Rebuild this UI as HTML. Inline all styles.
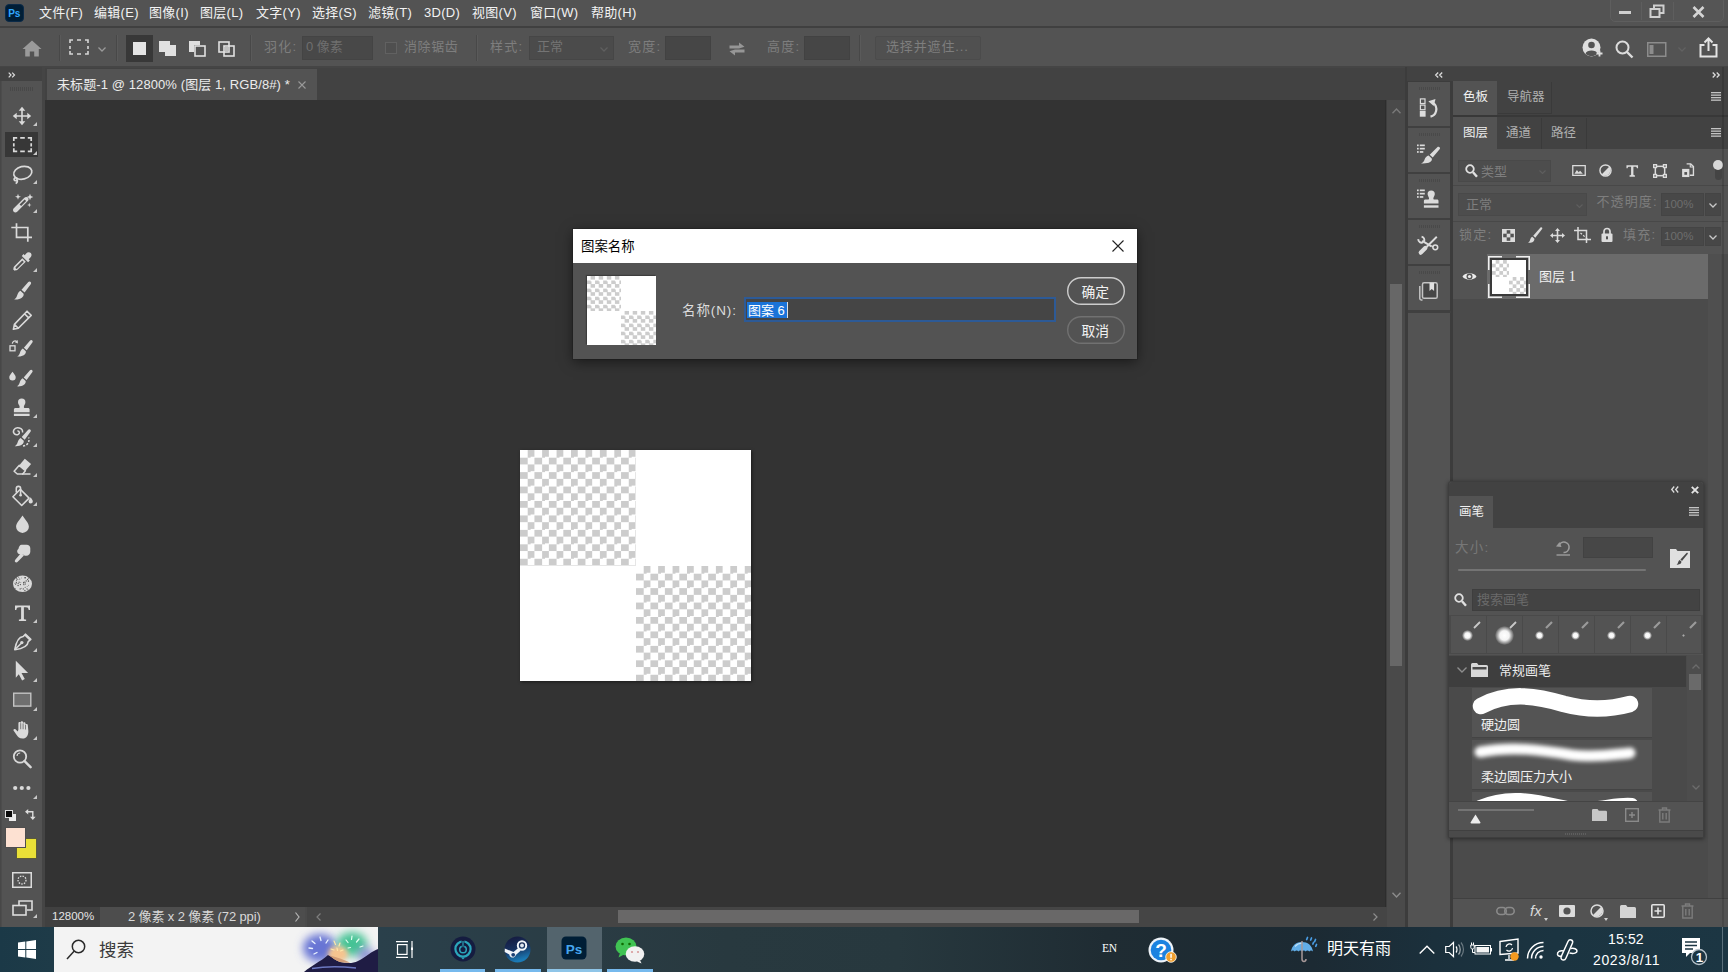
<!DOCTYPE html>
<html lang="zh-CN">
<head>
<meta charset="utf-8">
<title>未标题-1 @ 12800% (图层 1, RGB/8#) *</title>
<style>
*{box-sizing:border-box;margin:0;padding:0}
html,body{width:1728px;height:972px;overflow:hidden;background:#4a4a4a}
body{position:relative;font-family:"Liberation Sans","Noto Sans CJK SC",sans-serif;font-size:13px;color:#e6e6e6;line-height:1}
.a{position:absolute}
svg{position:absolute;overflow:visible}
.t{position:absolute;white-space:nowrap;line-height:1}
/* ===== menu bar ===== */
#menubar{position:absolute;left:0;top:0;width:1728px;height:28px;background:#535353;border-bottom:2px solid #404040}
#menubar .m{position:absolute;top:6px;font-size:13px;color:#f2f2f2;white-space:nowrap;letter-spacing:0.300px}
/* ===== options bar ===== */
#optbar{position:absolute;left:0;top:28px;width:1728px;height:39px;background:#535353;border-bottom:1px solid #454545}
#optbar .t{font-size:13px;color:#7e7e7e;top:12px}
#optbar>svg,#optbar>div{margin-top:0}
.sep{position:absolute;top:7px;width:1px;height:26px;background:#484848;border-right:1px solid #5a5a5a;box-sizing:content-box}
.field{position:absolute;background:#4b4b4b;border:1px solid #464646}
/* ===== workspace ===== */
#work{position:absolute;left:0;top:67px;width:1728px;height:860px;background:#454545}
#tools{position:absolute;left:0;top:0;width:42px;height:860px;background:#535353;box-shadow:inset 1.500px 0 0 #474747}
#toolhead{position:absolute;left:0;top:0;width:42px;height:14px;background:#424242}
#tabstrip{position:absolute;left:45px;top:1px;width:1360px;height:32px;background:#424242}
#doctab{position:absolute;left:2px;top:1px;width:270px;height:31px;background:#535353;color:#ececec;font-size:13px}
#canvas{position:absolute;left:45px;top:33px;width:1340px;height:807px;background:#333333}
#vscroll{position:absolute;left:1387px;top:33px;width:18px;height:807px;background:#4a4a4a;box-shadow:-1px 0 0 #3e3e3e,-2px 0 0 #2d2d2d}
#status{position:absolute;left:45px;top:840px;width:1360px;height:20px;background:#4a4a4a}
.ck{background-color:#fff;background-image:conic-gradient(#ccc 25%,#fff 0 50%,#ccc 0 75%,#fff 0);background-size:14.4375px 14.4375px;background-position:0 0}
.dk{left:0;width:41.500px;height:46px;border-bottom:2px solid #404040}
.dk:before{content:"";position:absolute;left:11px;top:5px;width:21px;height:3px;background:repeating-linear-gradient(90deg,#494949 0 1px,#535353 1px 2px)}
.ptab{font-size:12.5px}
.ck2{background-color:#fff;background-image:conic-gradient(#ccc 25%,#fff 0 50%,#ccc 0 75%,#fff 0);background-size:7.400px 7.400px}
.rb{top:134px;width:35px;height:37px;background:#535353}
.dot{border-radius:50%;background:radial-gradient(circle,#fff 0,#f4f4f4 35%,rgba(255,255,255,0) 72%)}
.ck3{background-color:#fff;background-image:conic-gradient(#ccc 25%,#fff 0 50%,#ccc 0 75%,#fff 0);background-size:8.100px 8.100px}
.ul{top:42px;height:3px;background:#76b9ed}
/* ===== taskbar ===== */
#taskbar{position:absolute;left:0;top:926.500px;width:1728px;height:45.500px;background:linear-gradient(90deg,#1b3947 0,#1e3b48 3%,#2a404b 22%,#2a3c44 34%,#28393f 42%,#27383e 52%,#1f2c33 64%,#1c2a33 76%,#1b303c 83%,#1b3441 90%,#1c3643 100%)}
</style>
</head>
<body>
<div id="menubar">
  <svg style="left:5px;top:4px" width="19" height="18" viewBox="0 0 19 18"><rect x="0.5" y="0.5" width="18" height="17" rx="3.5" fill="#001e36" stroke="#0b2a48"/><text x="3.2" y="13" font-family="Liberation Sans, sans-serif" font-size="10" font-weight="bold" fill="#31a8ff">Ps</text></svg>
  <span class="m" style="left:39px">文件(F)</span>
  <span class="m" style="left:94px">编辑(E)</span>
  <span class="m" style="left:149px">图像(I)</span>
  <span class="m" style="left:200px">图层(L)</span>
  <span class="m" style="left:256px">文字(Y)</span>
  <span class="m" style="left:312px">选择(S)</span>
  <span class="m" style="left:368px">滤镜(T)</span>
  <span class="m" style="left:424px">3D(D)</span>
  <span class="m" style="left:472px">视图(V)</span>
  <span class="m" style="left:530px">窗口(W)</span>
  <span class="m" style="left:591px">帮助(H)</span>
  <div class="a" style="left:1610px;top:-4px;width:114px;height:26px;border:1px solid #5e5e5e;border-radius:5px;background:#555"></div>
  <div class="a" style="left:1641px;top:2px;width:1px;height:18px;background:#5e5e5e"></div>
  <div class="a" style="left:1673px;top:2px;width:1px;height:18px;background:#5e5e5e"></div>
  <div class="a" style="left:1619px;top:11px;width:12px;height:3px;background:#cfcfcf"></div>
  <svg style="left:1649px;top:4px" width="16" height="15" viewBox="0 0 16 15" fill="none" stroke="#cfcfcf" stroke-width="2"><path d="M5 4V1.5h9.5V9H11"/><rect x="1.5" y="5" width="9" height="8"/></svg>
  <svg style="left:1692px;top:6px" width="13" height="12" viewBox="0 0 13 12" fill="none" stroke="#d4d4d4" stroke-width="2.6"><path d="M1.5 1l10 10M11.5 1l-10 10"/></svg>
</div>

<div id="optbar">
  <!-- home -->
  <svg style="left:22px;top:12px" width="20" height="17" viewBox="0 0 20 17"><path d="M10 0.5L0.5 9h2.7v7.5h4.6v-5h4.4v5h4.6V9h2.7z" fill="#9a9a9a"/></svg>
  <div class="sep" style="left:59px"></div>
  <!-- marquee -->
  <svg style="left:69px;top:11px" width="20" height="16" viewBox="0 0 20 16" fill="none" stroke="#d6d6d6" stroke-width="1.6"><path d="M1 4V1h3M8 1h4M16 1h3v3M19 7v3M19 12v3h-3M12 15H8M4 15H1v-3M1 10V7"/></svg>
  <svg style="left:98px;top:19px" width="8" height="5" viewBox="0 0 8 5" fill="none" stroke="#9a9a9a" stroke-width="1.3"><path d="M0.5 0.5l3.5 3.5l3.500 -3.5"/></svg>
  <div class="sep" style="left:116px"></div>
  <!-- selection modes -->
  <div class="a" style="left:126px;top:7px;width:27px;height:27px;background:#383838"></div>
  <div class="a" style="left:133px;top:14px;width:13px;height:13px;background:#e4e4e4"></div>
  <svg style="left:159px;top:13px" width="18" height="16" viewBox="0 0 18 16"><path d="M0 0h11v4h6v11H6v-4H0z" fill="#e0e0e0"/></svg>
  <svg style="left:189px;top:13px" width="17" height="16" viewBox="0 0 17 16"><path d="M0 0h11v4H5v7H0z" fill="#e0e0e0"/><rect x="6" y="5" width="10" height="10" fill="none" stroke="#e0e0e0" stroke-width="1.6"/></svg>
  <svg style="left:218px;top:13px" width="17" height="16" viewBox="0 0 17 16" fill="none" stroke="#e0e0e0" stroke-width="1.6"><rect x="1" y="1" width="10" height="10"/><rect x="6" y="5" width="10" height="10"/><rect x="7" y="6" width="3.500" height="4.500" fill="#bdbdbd" stroke="none"/></svg>
  <div class="sep" style="left:250px"></div>
  <span class="t" style="left:264px;letter-spacing:1.200px">羽化:</span>
  <div class="field" style="left:302px;top:8px;width:71px;height:24px;background:#484848;border-color:#444"></div>
  <span class="t" style="left:306px;color:#6f6f6f">0 像素</span>
  <div class="a" style="left:385px;top:14px;width:12px;height:12px;border:1px solid #616161;background:#4f4f4f"></div>
  <span class="t" style="left:404px;letter-spacing:0.600px">消除锯齿</span>
  <div class="sep" style="left:476px"></div>
  <span class="t" style="left:490px;letter-spacing:1.200px">样式:</span>
  <div class="field" style="left:529px;top:8px;width:85px;height:24px"></div>
  <span class="t" style="left:537px;color:#747474">正常</span>
  <svg style="left:600px;top:19px" width="8" height="5" viewBox="0 0 8 5" fill="none" stroke="#5f5f5f" stroke-width="1.3"><path d="M0.5 0.5l3.5 3.5l3.500 -3.5"/></svg>
  <span class="t" style="left:628px;letter-spacing:1.200px">宽度:</span>
  <div class="field" style="left:665px;top:8px;width:46px;height:24px;background:#464646;border-color:#424242"></div>
  <svg style="left:729px;top:14px" width="16" height="14" viewBox="0 0 16 14" fill="#969696"><path d="M0.500 3.400h9.500V0.500l5.500 4.300l-5.500 1.700H0.500zM15.500 10.600H6v2.900L0.500 9.200L6 7.500h9.500z"/></svg>
  <span class="t" style="left:767px;letter-spacing:1.200px">高度:</span>
  <div class="field" style="left:804px;top:8px;width:46px;height:24px;background:#464646;border-color:#424242"></div>
  <div class="sep" style="left:859px"></div>
  <div class="a" style="left:875px;top:8px;width:106px;height:24px;border:1px solid #4b4b4b;background:#505050;border-radius:2px"></div>
  <span class="t" style="left:886px;letter-spacing:0.850px">选择并遮住...</span>
  <!-- right icons -->
  <svg style="left:1582px;top:10px" width="22" height="21" viewBox="0 0 22 21"><circle cx="9.500" cy="9.500" r="9" fill="#dedede"/><circle cx="9.500" cy="7" r="3.300" fill="#535353"/><path d="M3.500 15.500c1-4 11-4 12 0c-3 3.500-9 3.500-12 0z" fill="#535353"/><path d="M14.500 15.500h6M17.500 12.500v6" stroke="#dedede" stroke-width="1.800"/></svg>
  <svg style="left:1615px;top:12px" width="19" height="19" viewBox="0 0 19 19" fill="none" stroke="#dcdcdc" stroke-width="2"><circle cx="7.500" cy="7.500" r="6"/><path d="M12 12l5.500 5.500" stroke-width="2.400"/></svg>
  <svg style="left:1647px;top:14px" width="20" height="15" viewBox="0 0 20 15"><rect x="0.750" y="0.750" width="18" height="13.500" fill="none" stroke="#8c8c8c" stroke-width="1.500"/><rect x="2.500" y="3" width="4" height="9" fill="#8c8c8c"/></svg>
  <svg style="left:1678px;top:19px" width="8" height="5" viewBox="0 0 8 5" fill="none" stroke="#616161" stroke-width="1.300"><path d="M0.500 0.500l3.500 3.500l3.500 -3.500"/></svg>
  <svg style="left:1699px;top:9px" width="19" height="21" viewBox="0 0 19 21" fill="none" stroke="#e4e4e4" stroke-width="2"><path d="M5.500 8H1.500v11.500h16V8H13.500"/><path d="M9.500 14V2M5.500 5.500L9.500 1.500l4 4" /></svg>
</div>

<div id="work">
<div id="tools"><div id="toolhead"></div>
<svg style="left:7.500px;top:5px" width="8" height="6" viewBox="0 0 8 6" fill="none" stroke="#dcdcdc" stroke-width="1.200"><path d="M0.700 0.700L3 3L0.700 5.300M4.200 0.700L6.500 3L4.200 5.300"/></svg>
<div class="a" style="left:10px;top:20px;width:23px;height:4px;background:repeating-linear-gradient(90deg,#484848 0 1px,#535353 1px 2px)"></div>
<svg style="left:9.700px;top:36.50px" width="24" height="24" viewBox="0 0 24 24"><g fill="none" stroke="#dadada" stroke-width="1.600"><path d="M12 5v14M5 12h14"/></g><g fill="#dadada"><path d="M12 2.800l3.300 3.900H8.700zM12 21.200l3.300-3.900H8.700zM2.800 12l3.900-3.300v6.600zM21.200 12l-3.900-3.300v6.600z"/></g></svg>
<svg style="left:32.500px;top:54.7px" width="4" height="4" viewBox="0 0 4 4"><path d="M4 0V4H0z" fill="#c8c8c8"/></svg>
<div class="a" style="left:5px;top:64.7px;width:33px;height:25px;background:#373737"></div>
<svg style="left:9.700px;top:65.75px" width="24" height="24" viewBox="0 0 24 24"><g fill="none" stroke="#dadada" stroke-width="1.700"><path d="M3.800 8V4.800h3.400M10.200 4.800h4.600M17.800 4.800h3.400V8M21.200 10.200v3.200M21.200 15.200v3.200h-3.400M14.800 18.400h-4.600M7.200 18.400H3.800v-3.200M3.800 13.400v-3.200"/></g></svg>
<svg style="left:32.500px;top:83.9px" width="4" height="4" viewBox="0 0 4 4"><path d="M4 0V4H0z" fill="#c8c8c8"/></svg>
<svg style="left:9.700px;top:95.00px" width="24" height="24" viewBox="0 0 24 24"><g fill="none" stroke="#dadada" stroke-width="1.700"><ellipse cx="12.800" cy="10.800" rx="9.200" ry="6.300" transform="rotate(-14 12.800 10.800)"/><path d="M6.300 15.800c-1.600-0.300-2.600 0.900-2.100 2c0.500 1.100 2.500 1.100 2.900-0.200c0.300-0.900-0.300-1.600-0.800-1.800zM7 18c0.700 1.300 0.300 2.600-1.300 3.600"/></g></svg>
<svg style="left:32.500px;top:113.2px" width="4" height="4" viewBox="0 0 4 4"><path d="M4 0V4H0z" fill="#c8c8c8"/></svg>
<svg style="left:9.700px;top:124.25px" width="24" height="24" viewBox="0 0 24 24"><g fill="#dadada"><path d="M14.400 6.700c1-1 2.600-1 3.500-0.100c0.900 0.900 0.900 2.500-0.100 3.500L7.200 20.700c-1 1-2.600 1-3.500 0.100c-0.900-0.900-0.900-2.500 0.100-3.500z"/><path d="M14.600 8.600l1.500 1.500l-5 5l-1.500-1.500z" fill="#535353"/><path d="M8 2.800l0.800 2.200l2.200 0.800l-2.200 0.800L8 8.800l-0.800-2.200L5 5.800l2.200-0.800zM20 2.700l0.900 2.400l2.400 0.900l-2.400 0.900L20 9.300l-0.900-2.400L16.700 6l2.400-0.900zM19.300 11.800l0.600 1.600l1.600 0.600l-1.600 0.600l-0.600 1.600l-0.600-1.600L17.100 14l1.600-0.600z"/></g></svg>
<svg style="left:32.500px;top:142.4px" width="4" height="4" viewBox="0 0 4 4"><path d="M4 0V4H0z" fill="#c8c8c8"/></svg>
<svg style="left:9.700px;top:153.50px" width="24" height="24" viewBox="0 0 24 24"><g fill="none" stroke="#dadada" stroke-width="1.700"><path d="M6.500 2.300v14h15.500M1.300 6.500h16.500v14.300"/></g></svg>
<svg style="left:9.700px;top:182.75px" width="24" height="24" viewBox="0 0 24 24"><g fill="#dadada"><path d="M16.200 3.400c1.300-1.500 3.500-1.500 4.600-0.300c1.100 1.200 1 3.200-0.400 4.500l-1.700 1.600l1.200 1.200l-1.800 1.800l-6.300-6.300l1.800-1.800l1.100 1.100z"/><path d="M12.300 8.200l3.500 3.500l-8.300 8.100c-0.900 0.900-2.200 0.300-2.900 1l-1.500-1.500c0.700-0.700 0.100-2 1-2.900zM12.300 10.600l-6.500 6.500c-0.400 0.400-0.400 1.100 0 1.500c0.400 0.400 1.100 0.400 1.500 0l6.500-6.500z" fill-rule="evenodd"/></g></svg>
<svg style="left:32.500px;top:200.9px" width="4" height="4" viewBox="0 0 4 4"><path d="M4 0V4H0z" fill="#c8c8c8"/></svg>
<svg style="left:9.700px;top:212.00px" width="24" height="24" viewBox="0 0 24 24"><g transform="translate(0,0) scale(1.0)" fill="#dadada"><path d="M18.300 3.100c1.300-1.500 3.600 0.200 2.600 1.900L14.600 13.600l-3.100-2.800z"/><path d="M10.400 11.800l3.200 2.900c0.700 3.200-3.200 6.200-9.400 5.700c2-0.900 2.500-2.600 3.100-4.300c0.600-1.800 1.500-3.500 3.100-4.300z"/></g></svg>
<svg style="left:9.700px;top:241.25px" width="24" height="24" viewBox="0 0 24 24"><g fill="none" stroke="#dadada" stroke-width="1.600" stroke-linejoin="round"><path d="M17 3.200l4.200 4.200L8.300 20.300L3.400 21.300l1-4.900zM14.500 5.700l4.200 4.200M4.400 16.400l3.900 3.900"/></g></svg>
<svg style="left:9.700px;top:270.50px" width="24" height="24" viewBox="0 0 24 24"><g transform="translate(3.3,-0.3) scale(0.92)" fill="#dadada"><path d="M18.300 3.100c1.300-1.500 3.600 0.200 2.600 1.900L14.600 13.600l-3.100-2.800z"/><path d="M10.400 11.800l3.200 2.900c0.700 3.200-3.200 6.200-9.400 5.700c2-0.900 2.500-2.600 3.100-4.300c0.600-1.800 1.500-3.500 3.100-4.300z"/></g><g fill="none" stroke="#dadada" stroke-width="1.300"><rect x="0" y="7.800" width="5" height="5"/><path d="M2.300 5.600c0.300-2.200 2.300-3.300 4.300-2.300"/></g><path d="M7.700 2l0.200 3.500l-3-1.300z" fill="#dadada"/></svg>
<svg style="left:9.700px;top:299.75px" width="24" height="24" viewBox="0 0 24 24"><g transform="translate(3,0.4) scale(0.93)" fill="#dadada"><path d="M18.300 3.100c1.300-1.500 3.600 0.200 2.600 1.900L14.600 13.600l-3.100-2.800z"/><path d="M10.400 11.800l3.200 2.900c0.700 3.200-3.200 6.200-9.400 5.700c2-0.900 2.500-2.600 3.100-4.300c0.600-1.800 1.500-3.500 3.100-4.300z"/></g><path d="M2.500 4.800c2 2.700 3.200 4 3.200 5.400a3.200 3.200 0 0 1-6.400 0c0-1.400 1.200-2.700 3.200-5.400z" fill="#dadada"/></svg>
<svg style="left:9.700px;top:329.00px" width="24" height="24" viewBox="0 0 24 24"><g fill="#dadada"><path d="M11.700 2.500a3.700 3.700 0 0 1 3.700 3.700c0 1.700-1.100 2.600-1.500 4.200c-0.200 1 0.300 1.600 1.100 1.600H18c0.900 0 1.600 0.600 1.600 1.600v2.600H3.900v-2.600c0-1 0.700-1.600 1.600-1.600h3c0.800 0 1.300-0.600 1.100-1.600C9.200 8.800 8 7.900 8 6.200a3.700 3.700 0 0 1 3.700-3.700z"/><rect x="3.900" y="17.700" width="15.700" height="2.300"/></g></svg>
<svg style="left:32.500px;top:347.2px" width="4" height="4" viewBox="0 0 4 4"><path d="M4 0V4H0z" fill="#c8c8c8"/></svg>
<svg style="left:9.700px;top:358.25px" width="24" height="24" viewBox="0 0 24 24"><g transform="translate(0.8,1.8) scale(0.95)" fill="#dadada"><path d="M18.300 3.100c1.300-1.500 3.600 0.200 2.600 1.900L14.600 13.600l-3.100-2.800z"/><path d="M10.400 11.800l3.200 2.900c0.700 3.200-3.200 6.200-9.400 5.700c2-0.900 2.500-2.600 3.100-4.300c0.600-1.800 1.500-3.500 3.100-4.300z"/></g><g fill="none" stroke="#dadada" stroke-width="1.500"><path d="M12.500 7.500c0.800-4.500-6.500-6.500-8.600-2.600c-1.700 3.300 1.800 5.900 4.400 4.400c1.900-1.100 1.100-3.700-0.900-3.300"/><path d="M13 21c4.200-0.300 7-4 5.600-8.500" stroke-dasharray="2.200 1.400"/></g></svg>
<svg style="left:32.500px;top:376.4px" width="4" height="4" viewBox="0 0 4 4"><path d="M4 0V4H0z" fill="#c8c8c8"/></svg>
<svg style="left:9.700px;top:387.50px" width="24" height="24" viewBox="0 0 24 24"><path d="M14.800 3.700l6.300 5.400l-5.700 6.700l-6.300-5.400z" fill="#dadada"/><path d="M9.100 10.400l6.300 5.400l-2.700 3.200H7.300l-3.200-2.700z" fill="none" stroke="#dadada" stroke-width="1.500" stroke-linejoin="round"/><path d="M12 19h8.500" stroke="#dadada" stroke-width="1.500"/></svg>
<svg style="left:32.500px;top:405.7px" width="4" height="4" viewBox="0 0 4 4"><path d="M4 0V4H0z" fill="#c8c8c8"/></svg>
<svg style="left:9.700px;top:416.75px" width="24" height="24" viewBox="0 0 24 24"><g fill="none" stroke="#dadada" stroke-width="1.600" stroke-linejoin="round"><path d="M10.300 5.300l8.800 8.800l-7.400 7.400l-8.800-8.800z"/><path d="M10.600 11V4.600c0-3-4.300-3-4.300 0v3.800"/></g><circle cx="10.600" cy="11.300" r="1.300" fill="#dadada"/><path d="M20.700 13.300c1.400 2.100 2.100 3.100 2.100 4.100a2.100 2.100 0 0 1-4.200 0c0-1 0.700-2 2.100-4.100z" fill="#dadada"/></svg>
<svg style="left:32.500px;top:434.9px" width="4" height="4" viewBox="0 0 4 4"><path d="M4 0V4H0z" fill="#c8c8c8"/></svg>
<svg style="left:9.700px;top:446.00px" width="24" height="24" viewBox="0 0 24 24"><path d="M12.500 2.400c3.900 5.700 6.400 8.200 6.400 11.300a6.400 6.200 0 0 1-12.800 0c0-3.100 2.500-5.600 6.400-11.300z" fill="#dadada"/></svg>
<svg style="left:9.700px;top:475.25px" width="24" height="24" viewBox="0 0 24 24"><g fill="#dadada"><path d="M11.500 2.800h5.200c2 0 3.600 1.500 3.600 3.500v3.500c0 2.300-1.700 4-4 4c-1.500 0-2.700-0.500-3.400-1.500c-1.600-0.500-3.500 0.700-5-1c-1.300-1.500-0.800-3.500 0.600-4.500C8.800 4.500 10 2.800 11.500 2.800z"/><path d="M11.300 10.800l2.600 2.600L8 19.600c-0.900 0.900-2.100 1.200-2.800 0.500c-0.700-0.700-0.400-1.900 0.500-2.800z"/></g></svg>
<svg style="left:9.700px;top:504.50px" width="24" height="24" viewBox="0 0 24 24"><ellipse cx="12.500" cy="11.800" rx="9.500" ry="8.300" fill="#dadada"/><g fill="#535353"><circle cx="9.7" cy="7.0" r="0.60"/><circle cx="5.7" cy="12.2" r="0.51"/><circle cx="5.4" cy="11.9" r="0.41"/><circle cx="11.4" cy="5.9" r="0.43"/><circle cx="11.3" cy="16.2" r="0.44"/><circle cx="8.1" cy="13.5" r="0.68"/><circle cx="13.7" cy="10.4" r="0.69"/><circle cx="5.2" cy="16.6" r="0.49"/><circle cx="6.8" cy="6.6" r="0.49"/><circle cx="17.6" cy="7.4" r="0.57"/><circle cx="14.7" cy="10.0" r="0.56"/><circle cx="5.5" cy="5.8" r="0.46"/><circle cx="15.4" cy="10.8" r="0.49"/><circle cx="13.9" cy="11.1" r="0.49"/><circle cx="17.2" cy="14.4" r="0.47"/><circle cx="13.7" cy="12.1" r="0.66"/><circle cx="16.2" cy="8.9" r="0.69"/><circle cx="6.4" cy="10.6" r="0.63"/><circle cx="6.9" cy="11.6" r="0.41"/><circle cx="15.2" cy="15.3" r="0.57"/><circle cx="18.5" cy="9.2" r="0.61"/><circle cx="14.0" cy="12.8" r="0.54"/><circle cx="17.9" cy="17.8" r="0.54"/><circle cx="15.1" cy="5.8" r="0.61"/><circle cx="14.9" cy="18.4" r="0.65"/><circle cx="9.1" cy="10.2" r="0.60"/><circle cx="4.9" cy="11.2" r="0.45"/><circle cx="6.4" cy="5.8" r="0.63"/><circle cx="6.6" cy="8.3" r="0.52"/><circle cx="18.4" cy="6.1" r="0.53"/><circle cx="13.3" cy="16.9" r="0.65"/><circle cx="18.3" cy="8.8" r="0.52"/><circle cx="10.2" cy="16.9" r="0.69"/><circle cx="6.9" cy="7.4" r="0.47"/><circle cx="8.2" cy="11.5" r="0.58"/><circle cx="8.7" cy="5.1" r="0.53"/><circle cx="10.4" cy="12.6" r="0.69"/><circle cx="15.5" cy="12.0" r="0.59"/><circle cx="15.3" cy="5.7" r="0.67"/><circle cx="17.0" cy="16.8" r="0.64"/><circle cx="10.8" cy="10.4" r="0.43"/><circle cx="14.6" cy="5.8" r="0.42"/><circle cx="7.8" cy="7.2" r="0.50"/><circle cx="5.3" cy="5.0" r="0.45"/><circle cx="6.1" cy="9.9" r="0.41"/><circle cx="18.5" cy="13.3" r="0.44"/></g></svg>
<svg style="left:9.700px;top:533.75px" width="24" height="24" viewBox="0 0 24 24"><path d="M5 4.600h15v4.300h-1.300c-0.300-2-1-2.700-2.800-2.700h-2v11c0 1 0.500 1.300 2.200 1.300V20H8.900v-1.500c1.700 0 2.200-0.300 2.200-1.300v-11h-2c-1.800 0-2.500 0.700-2.800 2.700H5z" fill="#dadada"/></svg>
<svg style="left:32.500px;top:552.0px" width="4" height="4" viewBox="0 0 4 4"><path d="M4 0V4H0z" fill="#c8c8c8"/></svg>
<svg style="left:9.700px;top:563.00px" width="24" height="24" viewBox="0 0 24 24"><g fill="none" stroke="#dadada" stroke-width="1.600" stroke-linejoin="round"><path d="M15.600 4.200l5.200 5.200l-2.600 2.300c-0.300 4.200-3.700 6.700-13.400 8c1.600-9.400 4.200-12.900 8.400-13.200z"/><path d="M5.200 19.300l5.800-5.800"/></g><circle cx="11.800" cy="12.600" r="1.700" fill="#dadada"/><path d="M15.600 4.200l5.200 5.200l-1.300 1.200l-5.200-5.200z" fill="#dadada"/></svg>
<svg style="left:32.500px;top:581.2px" width="4" height="4" viewBox="0 0 4 4"><path d="M4 0V4H0z" fill="#c8c8c8"/></svg>
<svg style="left:9.700px;top:592.25px" width="24" height="24" viewBox="0 0 24 24"><path d="M5.800 1.700L18.100 14h-6.600l3.300 6.100l-2.700 1.400l-3.300-6.300l-3 3.600z" fill="#dadada"/></svg>
<svg style="left:32.500px;top:610.5px" width="4" height="4" viewBox="0 0 4 4"><path d="M4 0V4H0z" fill="#c8c8c8"/></svg>
<svg style="left:9.700px;top:621.50px" width="24" height="24" viewBox="0 0 24 24"><rect x="3.700" y="4.200" width="17.100" height="12.900" fill="#6f6f6f" stroke="#c4c4c4" stroke-width="1.400"/></svg>
<svg style="left:32.500px;top:639.7px" width="4" height="4" viewBox="0 0 4 4"><path d="M4 0V4H0z" fill="#c8c8c8"/></svg>
<svg style="left:9.700px;top:650.75px" width="24" height="24" viewBox="0 0 24 24"><path d="M8.400 11.500V5.200c0-1.700 2.300-1.700 2.300 0V4.400c0-1.700 2.400-1.700 2.400 0v1c0-1.700 2.400-1.700 2.400 0v1.700c0-1.600 2.300-1.600 2.300 0l0.500 5.400c0.400 4.400-1.700 8.100-5.700 8.100c-3.300 0-4.500-1.300-6.300-4L3.700 12.800c-0.900-1.500 0.800-2.600 2-1.400l2.100 2.200z" fill="#dadada"/><g stroke="#535353" stroke-width="0.700"><path d="M10.700 5.200v6M13.100 5.400v5.800M15.500 7v4.500"/></g></svg>
<svg style="left:32.500px;top:669.0px" width="4" height="4" viewBox="0 0 4 4"><path d="M4 0V4H0z" fill="#c8c8c8"/></svg>
<svg style="left:9.700px;top:680.00px" width="24" height="24" viewBox="0 0 24 24"><g fill="none" stroke="#dadada"><circle cx="10" cy="9.500" r="6.200" stroke-width="1.800"/><path d="M14.600 14.200l6 6" stroke-width="2.400" stroke-linecap="round"/><path d="M7 9a3.200 3.200 0 0 1 3.200-3" stroke-width="1.100"/></g></svg>
<svg style="left:9.700px;top:709.00px" width="24" height="24" viewBox="0 0 24 24"><g fill="#dadada"><circle cx="5.200" cy="12" r="2.100"/><circle cx="11.800" cy="12" r="2.100"/><circle cx="18.400" cy="12" r="2.100"/></g></svg>
<svg style="left:32.500px;top:728.0px" width="4" height="4" viewBox="0 0 4 4"><path d="M4 0V4H0z" fill="#c8c8c8"/></svg>
<div class="a" style="left:9px;top:746.5px;width:7px;height:7px;background:#ececec"></div><div class="a" style="left:5px;top:742.5px;width:8px;height:8px;background:#0a0a0a;border:1px solid #e0e0e0"></div>
<svg style="left:25px;top:742px" width="11" height="11" viewBox="0 0 11 11" fill="none" stroke="#dcdcdc" stroke-width="1.400"><path d="M2.500 2.700h5.300v5.600"/><path d="M0 2.700L3.200 0v5.400zM7.800 11L5 7.800h5.600z" fill="#dcdcdc" stroke="none"/></svg>
<div class="a" style="left:16px;top:770.5px;width:21px;height:21px;background:#e9e037;border:1px solid #5a5a3a"></div>
<div class="a" style="left:5px;top:760px;width:21px;height:21px;background:#fde1d2;border:1px solid #4e4e4e"></div>
<svg style="left:12px;top:805px" width="20" height="16" viewBox="0 0 20 16" fill="none" stroke="#dcdcdc"><rect x="0.750" y="0.750" width="18.500" height="14.500" stroke-width="1.500"/><circle cx="10" cy="8" r="4" stroke-dasharray="1.500 1.200" stroke-width="1.300"/></svg>
<svg style="left:12px;top:833px" width="21" height="17" viewBox="0 0 21 17" fill="none" stroke="#dcdcdc" stroke-width="1.600"><path d="M7 5V1h13v9h-5"/><rect x="1" y="5.500" width="13" height="9.500" fill="#535353"/></svg>
<svg style="left:32.500px;top:847px" width="4" height="4" viewBox="0 0 4 4"><path d="M4 0V4H0z" fill="#c8c8c8"/></svg>
</div>
<div id="tabstrip">
  <div id="doctab"><span class="t" style="left:10px;top:9px;font-size:13px;letter-spacing:0.095px">未标题-1 @ 12800% (图层 1, RGB/8#) *</span>
  <svg style="left:251px;top:12px" width="8" height="8" viewBox="0 0 8 8" fill="none" stroke="#9a9a9a" stroke-width="1.100"><path d="M0.500 0.500l7 7M7.500 0.500l-7 7"/></svg></div>
</div>
<div id="canvas">
  <!-- document canvas 2x2 px @12800% -->
  <div class="a" style="left:475px;top:350px;width:231px;height:231px;background:#fff;box-shadow:1px 1px 3px rgba(0,0,0,.5)">
    <div class="a ck" style="left:0;top:0;width:115.500px;height:115.500px"></div>
    <div class="a ck" style="left:115.500px;top:115.500px;width:115.500px;height:115.500px"></div>
  </div>
</div>
<div id="vscroll">
  <svg style="left:5px;top:8px" width="9" height="6" viewBox="0 0 9 6" fill="none" stroke="#7a7a7a" stroke-width="1.400"><path d="M0.500 5.200L4.500 1l4 4.200"/></svg>
  <div class="a" style="left:2.700px;top:183.500px;width:12.500px;height:382px;background:#676767"></div>
  <svg style="left:5px;top:792px" width="9" height="6" viewBox="0 0 9 6" fill="none" stroke="#8c8c8c" stroke-width="1.400"><path d="M0.500 0.800L4.500 5l4 -4.200"/></svg>
</div>
<div id="status">
  <div class="a" style="left:0;top:0;width:55px;height:20px;background:#404040"></div>
  <span class="t" style="left:7px;top:4px;font-size:11.500px;color:#e4e4e4">12800%</span>
  <div class="a" style="left:55px;top:0;width:205px;height:20px;background:#4d4d4d"></div>
  <span class="t" style="left:83px;top:3px;font-size:13px;color:#d8d8d8;letter-spacing:-0.120px">2 像素 x 2 像素 (72 ppi)</span>
  <svg style="left:250px;top:5px" width="5" height="10" viewBox="0 0 5 10" fill="none" stroke="#b4b4b4" stroke-width="1.200"><path d="M0.500 0.500L4 5L0.500 9.500"/></svg>
  <div class="a" style="left:262px;top:0;width:1080px;height:20px;background:#454545"></div>
  <svg style="left:271px;top:6px" width="5" height="8" viewBox="0 0 5 8" fill="none" stroke="#7e7e7e" stroke-width="1.200"><path d="M4.500 0.500L1 4l3.500 3.500"/></svg>
  <div class="a" style="left:573px;top:2.700px;width:521px;height:13px;background:#696868"></div>
  <svg style="left:1328px;top:6px" width="5" height="8" viewBox="0 0 5 8" fill="none" stroke="#8e8e8e" stroke-width="1.200"><path d="M0.500 0.500L4 4L0.500 7.500"/></svg>
</div>

<!-- right dock: collapsed icon column + panels. coordinates relative to #work (page y - 67) -->
<div class="a" style="left:1405px;top:0;width:323px;height:860px;background:#3c3c3c"></div>
<div class="a" style="left:1407px;top:0;width:321px;height:14px;background:#424242"></div>
<svg style="left:1435px;top:5px" width="9" height="6" viewBox="0 0 9 6" fill="none" stroke="#dcdcdc" stroke-width="1.300"><path d="M3.200 0.500L0.700 3l2.500 2.500M7.200 0.500L4.700 3l2.500 2.500"/></svg>
<svg style="left:1712px;top:5px" width="9" height="6" viewBox="0 0 9 6" fill="none" stroke="#dcdcdc" stroke-width="1.300"><path d="M0.700 0.500L3.200 3L0.700 5.500M4.700 0.500L7.200 3L4.700 5.500"/></svg>

<div id="dockcol" class="a" style="left:1408px;top:15px;width:41.500px;height:845px;background:#535353">
  <div class="a dk" style="top:0"></div><div class="a dk" style="top:46px"></div><div class="a dk" style="top:92px"></div><div class="a dk" style="top:138px"></div><div class="a dk" style="top:184px"></div>
  <div class="a" style="left:0;top:229px;width:43px;height:2px;background:#404040"></div>
  <!-- history -->
  <svg style="left:11px;top:15px" width="22" height="22" viewBox="0 0 22 22"><g fill="none" stroke="#dcdcdc" stroke-width="1.200"><rect x="1.400" y="1.900" width="4.600" height="4.600"/><rect x="1.400" y="8.100" width="4.600" height="4.600"/></g><rect x="0.800" y="13.900" width="5.800" height="5.800" fill="#dcdcdc"/><path d="M11.500 19.600C17.500 18 19.500 10.500 14.500 6" fill="none" stroke="#dcdcdc" stroke-width="2.200"/><path d="M9.300 4.200l7.200-2.200l-1.800 7z" fill="#dcdcdc"/></svg>
  <!-- brush settings -->
  <svg style="left:9px;top:61px" width="24" height="22" viewBox="0 0 24 22"><g fill="#dcdcdc"><rect x="0" y="1.500" width="1.700" height="1.700"/><rect x="2.800" y="1.500" width="5" height="1.700"/><rect x="0" y="4.800" width="1.700" height="1.700"/><rect x="2.800" y="4.800" width="5" height="1.700"/><rect x="0" y="8.100" width="1.700" height="1.700"/><rect x="2.800" y="8.100" width="3.500" height="1.700"/><path d="M20.300 4.200c1.300-1.400 3.500 0.300 2.500 1.900L15.700 14.500l-3-2.700z"/><path d="M11.600 12.600l3.200 2.900c0.800 3.100-3 5.400-10.800 4.900c2.300-0.900 3-2.400 3.600-4c0.700-1.700 2-3.200 4-3.800z"/></g></svg>
  <!-- clone source -->
  <svg style="left:9px;top:106px" width="24" height="23" viewBox="0 0 24 23"><g fill="#dcdcdc"><rect x="0" y="1.500" width="1.700" height="1.700"/><rect x="2.800" y="1.500" width="5" height="1.700"/><rect x="0" y="4.800" width="1.700" height="1.700"/><rect x="2.800" y="4.800" width="5" height="1.700"/><rect x="0" y="8.100" width="1.700" height="1.700"/><rect x="2.800" y="8.100" width="3.500" height="1.700"/><path d="M14.200 2.400a3.600 3.600 0 0 1 3.600 3.600c0 1.600-1 2.400-1.400 3.900c-0.200 1 0.300 1.500 1 1.500H20c0.900 0 1.500 0.500 1.500 1.500v2.700H6.900v-2.700c0-1 0.600-1.500 1.500-1.500H11c0.700 0 1.200-0.500 1-1.500c-0.400-1.500-1.400-2.300-1.400-3.900A3.600 3.600 0 0 1 14.200 2.400z"/><rect x="6.900" y="17.300" width="14.600" height="2.400"/></g></svg>
  <!-- tools presets -->
  <svg style="left:8.500px;top:154px" width="23" height="20" viewBox="0 0 23 20"><g fill="none" stroke="#dcdcdc"><path d="M19.800 0.800L9.500 11" stroke-width="1.900"/><path d="M8.300 12L3.800 16.600" stroke-width="4.300" stroke-linecap="round"/><path d="M5.200 4.800L14.500 10.300" stroke-width="2"/><path d="M1.300 3.200a3.100 3.100 0 0 0 4.800 2.900M4.600 0.800a3.100 3.100 0 0 1 2.400 4.500" stroke-width="1.900"/><circle cx="18.300" cy="11.300" r="2.400" stroke-width="1.500"/><path d="M14.500 10.300l1.600 0.500" stroke-width="1.500"/></g></svg>
  <!-- libraries -->
  <svg style="left:10.500px;top:200px" width="19" height="19" viewBox="0 0 19 19"><g fill="none" stroke="#c4c4c4" stroke-width="1.500"><path d="M3.500 18H2.200a1.400 1.400 0 0 1-1.400-1.400V4"/><rect x="3.500" y="0.800" width="14.700" height="15.500" rx="1.600" fill="#464646"/></g><path d="M10.500 0.800h4.600v8.200l-2.300-2l-2.300 2z" fill="#e0e0e0"/></svg>
</div>

<!-- panel column x=1453..1721 ; page y = top+67 -->
<div id="pcol" class="a" style="left:1453px;top:14px;width:275px;height:846px;background:#4b4b4b">
  <!-- panel group 1 : 色板 / 导航器 (collapsed) -->
  <div class="a" style="left:0;top:0;width:275px;height:34px;background:#424242"></div>
  <div class="a" style="left:0;top:0;width:44px;height:34px;background:#535353"></div>
  <span class="t ptab" style="left:10px;top:10px;color:#f0f0f0">色板</span>
  <div class="a" style="left:45px;top:1px;width:54px;height:32px;border:1px solid #3a3a3a;border-left:none;border-top:none"></div>
  <span class="t ptab" style="left:54px;top:10px;color:#b0b0b0">导航器</span>
  <svg style="left:258px;top:11px" width="10" height="9" viewBox="0 0 10 9" fill="#c4c4c4"><rect y="0" width="10" height="1.300"/><rect y="2.500" width="10" height="1.300"/><rect y="5" width="10" height="1.300"/><rect y="7.500" width="10" height="1.300"/></svg>
  <div class="a" style="left:0;top:34px;width:275px;height:2px;background:#383838"></div>
  <!-- panel group 2 : 图层 / 通道 / 路径 -->
  <div class="a" style="left:0;top:36px;width:275px;height:32px;background:#424242"></div>
  <div class="a" style="left:0;top:36px;width:44px;height:33px;background:#535353"></div>
  <span class="t ptab" style="left:10px;top:46px;color:#f0f0f0">图层</span>
  <div class="a" style="left:45px;top:37px;width:44px;height:31px;border-right:1px solid #3a3a3a"></div>
  <span class="t ptab" style="left:53px;top:46px;color:#b0b0b0">通道</span>
  <div class="a" style="left:89px;top:37px;width:45px;height:31px;border-right:1px solid #3a3a3a"></div>
  <span class="t ptab" style="left:98px;top:46px;color:#b0b0b0">路径</span>
  <svg style="left:258px;top:47px" width="10" height="9" viewBox="0 0 10 9" fill="#c4c4c4"><rect y="0" width="10" height="1.300"/><rect y="2.500" width="10" height="1.300"/><rect y="5" width="10" height="1.300"/><rect y="7.500" width="10" height="1.300"/></svg>
  <!-- layers body -->
  <div class="a" style="left:0;top:68px;width:275px;height:105px;background:#535353"></div>
  <!-- filter row -->
  <div class="a" style="left:5px;top:79px;width:93px;height:22px;background:#4d4d4d;border:1px solid #494949"></div>
  <svg style="left:12px;top:83px" width="13" height="14" viewBox="0 0 13 14" fill="none" stroke="#e0e0e0" stroke-width="1.800"><circle cx="5" cy="5" r="3.800"/><path d="M8 8.200l4 4.600" stroke-width="2.400"/></svg>
  <span class="t" style="left:28px;top:84px;font-size:13px;color:#7e7e7e">类型</span>
  <svg style="left:86px;top:89px" width="7" height="5" viewBox="0 0 7 5" fill="none" stroke="#5e5e5e" stroke-width="1.200"><path d="M0.500 0.500l3 3l3 -3"/></svg>
  <svg style="left:118.500px;top:83.500px" width="14" height="11" viewBox="0 0 15 12"><rect x="0.700" y="0.700" width="13.600" height="10.600" fill="none" stroke="#dcdcdc" stroke-width="1.400"/><path d="M2.500 9.500l2.700-4l2 2.500l1.500-1.800l3 3.300z" fill="#dcdcdc"/></svg>
  <svg style="left:145.500px;top:82.500px" width="13" height="13" viewBox="0 0 14 14"><circle cx="7" cy="7" r="6" fill="none" stroke="#dcdcdc" stroke-width="1.500"/><path d="M2.800 11.200A6 6 0 0 0 11.200 2.800z" fill="#dcdcdc"/></svg>
  <svg style="left:173px;top:83.500px" width="12.500" height="12" viewBox="0 0 14 13"><path d="M0.500 0h13v3.500h-1.300c-0.200-1.300-0.700-1.800-2-1.800H8.300v8.500c0 0.800 0.400 1.100 1.700 1.100V13H4v-1.700c1.300 0 1.700-0.300 1.700-1.100V1.700H3.800c-1.300 0-1.800 0.500-2 1.800H0.500z" fill="#dcdcdc"/></svg>
  <svg style="left:199.500px;top:82.500px" width="14" height="14" viewBox="0 0 15 15"><rect x="2.500" y="2.500" width="10" height="10" fill="none" stroke="#dcdcdc" stroke-width="1.600"/><g fill="#dcdcdc"><rect x="0" y="0" width="4.500" height="4.500"/><rect x="10.500" y="0" width="4.500" height="4.500"/><rect x="0" y="10.500" width="4.500" height="4.500"/><rect x="10.500" y="10.500" width="4.500" height="4.500"/></g><g fill="#535353"><rect x="1.500" y="1.500" width="1.500" height="1.500"/><rect x="12" y="1.500" width="1.500" height="1.500"/><rect x="1.500" y="12" width="1.500" height="1.500"/><rect x="12" y="12" width="1.500" height="1.500"/></g></svg>
  <svg style="left:228.500px;top:82px" width="12" height="14.500" viewBox="0 0 13 16"><path d="M5 1h4.500l3 3v9.500H8.500" fill="none" stroke="#dcdcdc" stroke-width="1.500"/><path d="M9 1v3.500h3.500" fill="none" stroke="#dcdcdc" stroke-width="1.200"/><rect x="0" y="6.500" width="8" height="9" fill="#dcdcdc"/><rect x="2.500" y="10" width="3" height="3" fill="#535353"/></svg>
  <div class="a" style="left:261.500px;top:82px;width:7px;height:17px;border-radius:3.500px;background:#444"></div>
  <div class="a" style="left:260px;top:79.300px;width:10px;height:10px;border-radius:5px;background:#d8d8d8"></div>
  <div class="a" style="left:0;top:104px;width:275px;height:1px;background:#484848"></div>
  <!-- blend row -->
  <div class="a" style="left:5px;top:112px;width:129px;height:23px;background:#4d4d4d;border:1px solid #494949"></div>
  <span class="t" style="left:13px;top:117px;font-size:13px;color:#7e7e7e">正常</span>
  <svg style="left:123px;top:123px" width="7" height="5" viewBox="0 0 7 5" fill="none" stroke="#5e5e5e" stroke-width="1.200"><path d="M0.500 0.500l3 3l3 -3"/></svg>
  <span class="t" style="left:143.500px;top:114px;font-size:13px;color:#7e7e7e;letter-spacing:1.100px">不透明度:</span>
  <div class="a" style="left:208px;top:112px;width:43px;height:23px;background:#484848;border:1px solid #444"></div>
  <span class="t" style="left:211px;top:118px;font-size:11.500px;color:#6e6e6e">100%</span>
  <div class="a" style="left:252px;top:112px;width:16px;height:23px;background:#474747;border:1px solid #444"></div>
  <svg style="left:256px;top:122px" width="8" height="5" viewBox="0 0 8 5" fill="none" stroke="#c8c8c8" stroke-width="1.300"><path d="M0.500 0.500l3.500 3.500l3.500 -3.500"/></svg>
  <div class="a" style="left:0;top:140px;width:275px;height:1px;background:#484848"></div>
  <!-- lock row -->
  <span class="t" style="left:6px;top:147px;font-size:13px;color:#7e7e7e;letter-spacing:1.200px">锁定:</span>
  <svg style="left:49px;top:148px" width="13" height="13" viewBox="0 0 13 13"><rect x="0.600" y="0.600" width="11.800" height="11.800" fill="none" stroke="#dcdcdc" stroke-width="1.200"/><g fill="#dcdcdc"><rect x="1" y="1" width="3.700" height="3.700"/><rect x="8.300" y="1" width="3.700" height="3.700"/><rect x="4.700" y="4.700" width="3.700" height="3.700"/><rect x="1" y="8.300" width="3.700" height="3.700"/><rect x="8.300" y="8.300" width="3.700" height="3.700"/></g></svg>
  <svg style="left:74px;top:146px" width="16" height="17" viewBox="0 0 16 17" fill="#dcdcdc"><path d="M13.500 0.500c1-1 2.400 0.300 1.600 1.400L8.300 10.800l-2.100-2z"/><path d="M5.300 9.700l2.100 2c0.300 2.500-2.200 4.500-6.400 4c1.600-0.600 1.800-2 2.200-3.200c0.400-1.300 1-2.300 2.100-2.800z"/></svg>
  <svg style="left:97px;top:147px" width="15" height="15" viewBox="0 0 15 15" fill="#dcdcdc"><path d="M7.500 0l2.500 3h-1.700v3.700H12V5l3 2.500L12 10V8.300H8.300V12H10l-2.500 3L5 12h1.700V8.300H3V10L0 7.500L3 5v1.700h3.700V3H5z"/></svg>
  <svg style="left:121px;top:146px" width="17" height="16" viewBox="0 0 17 16" fill="none" stroke="#dcdcdc" stroke-width="1.500"><path d="M4 0v12.500h13M0 3.500h12.500V16"/><path d="M6.500 6l7.500 6.500" stroke-dasharray="2 1.500" stroke-width="1.200"/></svg>
  <svg style="left:148px;top:146px" width="12" height="15" viewBox="0 0 12 15"><path d="M3 7V4.500a3 3 0 0 1 6 0V7" fill="none" stroke="#dcdcdc" stroke-width="1.700"/><rect x="0.500" y="6.500" width="11" height="8.500" rx="1" fill="#dcdcdc"/><rect x="5" y="9.300" width="2" height="3" fill="#535353"/></svg>
  <span class="t" style="left:170px;top:147px;font-size:13px;color:#7e7e7e;letter-spacing:1.200px">填充:</span>
  <div class="a" style="left:208px;top:146px;width:43px;height:19px;background:#484848;border:1px solid #444"></div>
  <span class="t" style="left:211px;top:150px;font-size:11.500px;color:#6e6e6e">100%</span>
  <div class="a" style="left:252px;top:146px;width:16px;height:19px;background:#474747;border:1px solid #444"></div>
  <svg style="left:256px;top:154px" width="8" height="5" viewBox="0 0 8 5" fill="none" stroke="#c8c8c8" stroke-width="1.300"><path d="M0.500 0.500l3.500 3.500l3.500 -3.500"/></svg>
  <!-- layer row -->
  <div class="a" style="left:0;top:173px;width:34px;height:45px;background:#535353"></div><div class="a" style="left:33.700px;top:173px;width:221.500px;height:45px;background:#6b6b6b"></div>
  <div class="a" style="left:255px;top:173px;width:13px;height:644px;background:#4f4f4f"></div>
  <svg style="left:9px;top:190px" width="15" height="11" viewBox="0 0 15 11"><path d="M0.500 5.500C3 1.300 12 1.300 14.500 5.500C12 9.700 3 9.700 0.500 5.500z" fill="#ececec"/><circle cx="7.500" cy="5.500" r="3" fill="#535353"/><circle cx="7.500" cy="5.500" r="1.600" fill="#ececec"/></svg>
  <div class="a" style="left:37px;top:177px;width:38px;height:38px;background:#3a3a3a"></div>
  <div class="a" style="left:39px;top:179px;width:34px;height:34px;background:#fff">
    <div class="a ck2" style="left:0;top:0;width:17px;height:17px"></div><div class="a ck2" style="left:17px;top:17px;width:17px;height:17px"></div>
  </div>
  <svg style="left:35px;top:175px" width="42" height="42" viewBox="0 0 42 42" fill="none" stroke="#f0f0f0" stroke-width="1.500"><path d="M0.750 14V0.750H14M28 0.750h13.250V14M41.250 28v13.250H28M14 41.250H0.750V28"/></svg>
  <span class="t" style="left:86px;top:189px;font-size:13px;color:#f2f2f2">图层 <span style="font-family:'Liberation Serif','Noto Serif CJK SC',serif;font-size:14px">1</span></span>
  <!-- layers footer -->
  <div class="a" style="left:0;top:817px;width:275px;height:29px;background:#535353;border-top:1px solid #404040"></div>
  <svg style="left:43px;top:825px" width="19" height="10" viewBox="0 0 19 10" fill="none" stroke="#8a8a8a" stroke-width="1.600"><rect x="0.800" y="1.500" width="9.500" height="7" rx="3.500"/><rect x="8.700" y="1.500" width="9.500" height="7" rx="3.500"/></svg>
  <span class="t" style="left:77px;top:822px;font-size:15px;font-style:italic;color:#d8d8d8">fx</span>
  <svg style="left:91px;top:837px" width="4" height="3" viewBox="0 0 4 3"><path d="M0 0h4L2 3z" fill="#d0d0d0"/></svg>
  <svg style="left:106px;top:824px" width="16" height="12" viewBox="0 0 16 12"><rect width="16" height="12" rx="1" fill="#dcdcdc"/><circle cx="8" cy="6" r="3.600" fill="#535353"/></svg>
  <svg style="left:137px;top:823px" width="14" height="14" viewBox="0 0 14 14"><circle cx="7" cy="7" r="6" fill="none" stroke="#dcdcdc" stroke-width="1.500"/><path d="M2.800 11.200A6 6 0 0 0 11.200 2.800z" fill="#dcdcdc"/></svg>
  <svg style="left:151px;top:837px" width="4" height="3" viewBox="0 0 4 3"><path d="M0 0h4L2 3z" fill="#d0d0d0"/></svg>
  <svg style="left:167px;top:824px" width="16" height="13" viewBox="0 0 16 13"><path d="M0 1.500A1.500 1.500 0 0 1 1.500 0H6l1.500 2H14.500A1.500 1.500 0 0 1 16 3.500V13H0z" fill="#d4d4d4"/></svg>
  <svg style="left:198px;top:823px" width="14" height="14" viewBox="0 0 14 14" fill="none" stroke="#e4e4e4"><rect x="0.800" y="0.800" width="12.400" height="12.400" rx="1" stroke-width="1.600"/><path d="M7 3.500v7M3.500 7h7" stroke-width="1.600"/></svg>
  <svg style="left:228px;top:822px" width="13" height="16" viewBox="0 0 13 16" fill="none" stroke="#7c7c7c" stroke-width="1.400"><path d="M0.500 3h12M4.500 3V1h4v2M1.800 3v12h9.400V3M4.800 6v6.500M8.200 6v6.500"/></svg>
</div>

<div class="a" style="left:1722px;top:0;width:1.500px;height:860px;background:rgba(0,0,0,.13);z-index:1"></div>
<!-- floating brush panel: page x 1449..1704, y 482..837  (work y = page-67) -->
<div id="brushp" class="a" style="left:1448px;top:414px;width:256px;height:357px;background:#535353;box-shadow:0 1px 4px rgba(0,0,0,.45);border:1px solid #3e3e3e;border-radius:3px 3px 0 0">
  <div class="a" style="left:0;top:0;width:254px;height:14px;background:#424242;border-radius:3px 3px 0 0"></div>
  <svg style="left:222px;top:4px" width="9" height="7" viewBox="0 0 9 7" fill="none" stroke="#dcdcdc" stroke-width="1.300"><path d="M3.200 0.500L0.700 3.500l2.500 3M7.200 0.500L4.700 3.500l2.500 3"/></svg>
  <svg style="left:242px;top:4px" width="8" height="8" viewBox="0 0 8 8" fill="none" stroke="#e4e4e4" stroke-width="1.900"><path d="M0.800 0.800l6.400 6.400M7.200 0.800L0.800 7.200"/></svg>
  <div class="a" style="left:0;top:14px;width:254px;height:32px;background:#424242"></div>
  <div class="a" style="left:0;top:14px;width:44px;height:32px;background:#535353"></div>
  <span class="t ptab" style="left:10px;top:24px;color:#f0f0f0">画笔</span>
  <svg style="left:240px;top:25px" width="10" height="9" viewBox="0 0 10 9" fill="#c4c4c4"><rect y="0" width="10" height="1.300"/><rect y="2.500" width="10" height="1.300"/><rect y="5" width="10" height="1.300"/><rect y="7.500" width="10" height="1.300"/></svg>
  <!-- size row -->
  <span class="t" style="left:6px;top:59px;font-size:13.500px;color:#777;letter-spacing:1.300px">大小:</span>
  <svg style="left:107px;top:58px" width="15" height="16" viewBox="0 0 15 16" fill="none" stroke="#9c9c9c" stroke-width="1.600"><path d="M3 5.500A5.200 5.200 0 1 1 7.500 12.500"/><path d="M0 6.500L3.500 2l2 5z" fill="#9c9c9c" stroke="none"/><path d="M0.500 15h13.500" stroke-width="1.400"/></svg>
  <div class="a" style="left:134px;top:55px;width:70px;height:21px;background:#474747;border:1px solid #424242"></div>
  <svg style="left:221px;top:67px" width="20" height="19" viewBox="0 0 20 19"><path d="M0 0h6l1.500 2H20v17H0z" fill="#e0e0e0"/><g fill="#484848"><path d="M16.500 4c0.700-0.700 1.800 0.200 1.200 1L12 12l-1.600-1.500z"/><path d="M9.700 11l1.700 1.600c0.200 1.900-1.700 3.400-4.900 3c1.200-0.400 1.400-1.500 1.700-2.500c0.300-1 0.800-1.700 1.500-2.100z"/></g></svg>
  <div class="a" style="left:9px;top:87px;width:188px;height:2px;background:#747474;border-radius:1px"></div>
  <!-- search -->
  <svg style="left:5px;top:111px" width="13" height="14" viewBox="0 0 13 14" fill="none" stroke="#e0e0e0" stroke-width="1.800"><circle cx="5" cy="5" r="3.800"/><path d="M8 8.200l4 4.600" stroke-width="2.400"/></svg>
  <div class="a" style="left:23px;top:107px;width:228px;height:22px;background:#434343;border:1px solid #3e3e3e"></div>
  <span class="t" style="left:28px;top:111px;font-size:13px;color:#6a6a6a">搜索画笔</span>
  <!-- recent brushes -->
  <div class="a" style="left:0;top:133px;width:254px;height:39px;background:#4a4a4a"></div>
  <div class="a rb" style="left:2px"></div><div class="a rb" style="left:38px"></div><div class="a rb" style="left:74px"></div><div class="a rb" style="left:110px"></div><div class="a rb" style="left:146px"></div><div class="a rb" style="left:182px"></div><div class="a rb" style="left:218px;width:34px"></div>
  <div class="a dot" style="left:13px;top:148px;width:11px;height:11px"></div>
  <div class="a dot" style="left:46px;top:144px;width:19px;height:19px"></div>
  <div class="a dot" style="left:86px;top:149px;width:9px;height:9px"></div>
  <div class="a dot" style="left:122px;top:149px;width:9px;height:9px"></div>
  <div class="a dot" style="left:158px;top:149px;width:9px;height:9px"></div>
  <div class="a dot" style="left:194px;top:149px;width:9px;height:9px"></div>
  <div class="a dot" style="left:233px;top:152px;width:3px;height:3px;opacity:.5"></div>
  <svg style="left:0;top:138px" width="254" height="10" viewBox="0 0 254 10" fill="none" stroke="#c8c8c8" stroke-width="1.800"><path d="M25 8l6-6M61 8l6-6"/><g stroke="#9a9a9a" stroke-width="2.200"><path d="M97 8l6-6M133 8l6-6M169 8l6-6M205 8l6-6M241 8l6-6"/></g></svg>
  <!-- list -->
  <div class="a" style="left:0;top:173px;width:254px;height:146px;background:#4a4a4a;overflow:hidden">
    <div class="a" style="left:0;top:1px;width:237px;height:31px;background:#3e3e3e"></div>
    <svg style="left:8px;top:12px" width="10" height="6" viewBox="0 0 10 6" fill="none" stroke="#8e8e8e" stroke-width="1.400"><path d="M0.500 0.500L5 5l4.500-4.500"/></svg>
    <svg style="left:22px;top:8px" width="17" height="14" viewBox="0 0 17 14"><path d="M0 1.500A1.500 1.500 0 0 1 1.500 0H6l1.500 2h8A1.500 1.500 0 0 1 17 3.500V14H0z" fill="#d8d8d8"/><rect x="1.500" y="4" width="14" height="2.500" fill="#4a4a4a"/></svg>
    <span class="t" style="left:50px;top:9px;font-size:13px;color:#ececec">常规画笔</span>
    <div class="a" style="left:23px;top:33px;width:180px;height:50px;background:#545454;border-bottom:1px solid #444"></div>
    <svg style="left:23px;top:34px" width="170" height="32" viewBox="0 0 170 32"><path d="M9 17C35 3 62 6 92 15C118 22 140 20 158 15" fill="none" stroke="#fff" stroke-width="16.500" stroke-linecap="round"/></svg>
    <span class="t" style="left:32px;top:63px;font-size:13px;color:#f0f0f0">硬边圆</span>
    <div class="a" style="left:23px;top:85px;width:180px;height:50px;background:#545454;border-bottom:1px solid #444"></div>
    <svg style="left:23px;top:87px" width="170" height="26" viewBox="0 0 170 26"><path d="M8 10C40 4 70 8 100 13C125 16 145 12 158 11" fill="none" stroke="#fff" stroke-width="11" stroke-linecap="round" style="filter:blur(2.200px)"/></svg>
    <span class="t" style="left:32px;top:115px;font-size:13px;color:#f0f0f0">柔边圆压力大小</span>
    <div class="a" style="left:23px;top:137px;width:180px;height:20px;background:#545454"></div>
    <svg style="left:23px;top:139px" width="170" height="20" viewBox="0 0 170 20"><path d="M8 12C40 -2 70 8 100 14C125 16 145 8 160 10" fill="none" stroke="#fff" stroke-width="12" stroke-linecap="round"/></svg>
    <!-- scrollbar -->
    <div class="a" style="left:238px;top:0;width:16px;height:146px;background:#4d4d4d"></div>
    <svg style="left:243px;top:9px" width="8" height="5" viewBox="0 0 8 5" fill="none" stroke="#6c6c6c" stroke-width="1.300"><path d="M0.500 4.500L4 1l3.500 3.500"/></svg>
    <div class="a" style="left:240px;top:19px;width:12px;height:16px;background:#6a6a6a"></div>
    <svg style="left:243px;top:130px" width="8" height="5" viewBox="0 0 8 5" fill="none" stroke="#6c6c6c" stroke-width="1.300"><path d="M0.500 0.500L4 4L7.500 0.500"/></svg>
  </div>
  <!-- bottom bar -->
  <div class="a" style="left:0;top:319px;width:254px;height:29px;background:#535353;border-top:1px solid #444"></div>
  <div class="a" style="left:9px;top:327px;width:76px;height:2px;background:#747474"></div>
  <svg style="left:21px;top:332px" width="11" height="10" viewBox="0 0 11 10"><path d="M5.500 0.500L10.500 8.500a1 1 0 0 1-1 1H1.500a1 1 0 0 1-1-1z" fill="#ececec"/></svg>
  <svg style="left:143px;top:327px" width="15" height="12" viewBox="0 0 15 12"><path d="M0 1.300A1.300 1.300 0 0 1 1.300 0H5.500l1.300 1.800H13.700A1.300 1.300 0 0 1 15 3.100V12H0z" fill="#c6c6c6"/></svg>
  <svg style="left:176px;top:326px" width="14" height="14" viewBox="0 0 14 14" fill="none" stroke="#8a8a8a"><rect x="0.700" y="0.700" width="12.600" height="12.600" stroke-width="1.400"/><path d="M7 4v6M4 7h6" stroke-width="1.400"/></svg>
  <svg style="left:209px;top:325px" width="13" height="16" viewBox="0 0 13 16" fill="none" stroke="#7c7c7c" stroke-width="1.400"><path d="M0.500 3h12M4.500 3V1h4v2M1.800 3v12h9.400V3M4.800 6v6.500M8.200 6v6.500"/></svg>
  <div class="a" style="left:0;top:348px;width:254px;height:7px;background:#4a4a4a;border-top:1px solid #404040"></div>
  <div class="a" style="left:116px;top:351px;width:22px;height:2px;background:repeating-linear-gradient(90deg,#5e5e5e 0 1px,#4a4a4a 1px 2px)"></div>
</div>

</div>
<!-- dialog: page x 573..1137, y 229..358.5 -->
<div id="dlg" class="a" style="left:573px;top:229px;width:564px;height:129.500px;background:#535353;box-shadow:0 3px 12px rgba(0,0,0,.5),0 0 0 1px rgba(40,40,40,.6)">
  <div class="a" style="left:0;top:0;width:564px;height:34px;background:#fff"></div>
  <span class="t" style="left:8px;top:11px;font-size:13.400px;color:#000">图案名称</span>
  <svg style="left:539px;top:11px" width="12" height="12" viewBox="0 0 12 12" fill="none" stroke="#222" stroke-width="1.100"><path d="M0.500 0.500l11 11M11.500 0.500l-11 11"/></svg>
  <div class="a" style="left:13.500px;top:47px;width:69px;height:69px;background:#fff;box-shadow:-1px -1px 1px rgba(40,40,40,.5)">
    <div class="a ck3" style="left:0;top:0;width:34.500px;height:34.500px"></div><div class="a ck3" style="left:34.500px;top:34.500px;width:34.500px;height:34.500px"></div>
  </div>
  <span class="t" style="left:109px;top:75px;font-size:13.500px;color:#dcdcdc;letter-spacing:0.900px">名称(N):</span>
  <div class="a" style="left:171px;top:68px;width:312px;height:25px;background:#454545;border:2px solid #2d5a96"></div>
  <div class="a" style="left:174px;top:72.500px;width:40px;height:16.500px;background:#1a73d8"></div>
  <span class="t" style="left:175px;top:75px;font-size:13px;color:#fff">图案 6</span>
  <div class="a" style="left:214px;top:72.500px;width:1px;height:16.500px;background:#e0e0e0"></div>
  <svg style="left:494px;top:48px" width="58" height="28" viewBox="0 0 58 28" fill="none" stroke="#cdcdcd" stroke-width="1.400"><rect x="0.700" y="0.700" width="56.600" height="26.600" rx="13.300"/></svg>
  <span class="t" style="left:508.500px;top:56.500px;font-size:13.800px;color:#f2f2f2">确定</span>
  <svg style="left:494px;top:87px" width="58" height="28" viewBox="0 0 58 28" fill="none" stroke="#717171" stroke-width="1.400"><rect x="0.700" y="0.700" width="56.600" height="26.600" rx="13.300"/></svg>
  <span class="t" style="left:508.500px;top:95.500px;font-size:13.800px;color:#f2f2f2">取消</span>
</div>

<div id="taskbar">
  <!-- start -->
  <svg style="left:18px;top:13px" width="18" height="19" viewBox="0 0 18 19" fill="#fff"><path d="M0 2.600L7.300 1.500V9H0zM8.300 1.400L18 0v9H8.300zM0 10h7.300v7.500L0 16.400zM8.300 10H18v9L8.300 17.600z"/></svg>
  <!-- search box -->
  <div class="a" style="left:54px;top:0;width:324px;height:45px;background:#f3f3f3;overflow:hidden">
    <svg style="left:12px;top:12px" width="20" height="21" viewBox="0 0 20 21" fill="none" stroke="#2a2a2a" stroke-width="1.500"><circle cx="12.500" cy="7.500" r="6.200"/><path d="M8 12.200L1 20"/></svg>
    <span class="t" style="left:45px;top:15px;font-size:17.500px;color:#3a3a3a">搜索</span>
    <!-- illustration -->
    <svg style="left:236px;top:0" width="88" height="45" viewBox="0 0 88 45">
      <defs><filter id="b4" x="-50%" y="-50%" width="200%" height="200%"><feGaussianBlur stdDeviation="4"/></filter><filter id="b2" x="-50%" y="-50%" width="200%" height="200%"><feGaussianBlur stdDeviation="2.500"/></filter><filter id="b1" x="-50%" y="-50%" width="200%" height="200%"><feGaussianBlur stdDeviation="0.600"/></filter></defs>
      <ellipse cx="30" cy="21" rx="17" ry="14" fill="#6774d4" filter="url(#b4)"/>
      <ellipse cx="62" cy="17" rx="15" ry="12" fill="#45c394" filter="url(#b4)"/>
      <ellipse cx="48" cy="27" rx="10" ry="8" fill="#f6c48e" filter="url(#b2)"/>
      <ellipse cx="76" cy="28" rx="8" ry="8" fill="#7d7fd0" filter="url(#b4)" opacity="0.800"/>
      <g stroke="#eaf3ff" stroke-width="1.300" stroke-linecap="round" filter="url(#b1)"><path d="M30 10l1 3.500M22 14l3 2.500M38 13l-2 3M19 21l3.500 0.500M24 27l3-1.500"/></g>
      <g stroke="#ffe8a8" stroke-width="1.200" stroke-linecap="round" filter="url(#b1)"><path d="M44 14l1.500 3.500M50 16l-1 3M41 22l3 1M53 23l-2.500 1M47 21l0.500 2.500"/></g>
      <g stroke="#e2fff0" stroke-width="1.200" stroke-linecap="round" filter="url(#b1)"><path d="M62 9l-0.500 3.500M56 13l2 2.500M69 12l-2.500 3M73 19l-3 1M58 21l2.500-0.500"/></g>
      <path d="M14 45C22 38 30 35 38 28C42 30 46 34 50 35C56 36 62 37 68 34C76 30 82 24 88 22V45z" fill="#1f1c44"/>
      <path d="M38 28C42 30 46 34 50 35C54 35.500 57 36 60 35.500C54 33 47 30 38 28z" fill="#d19a72" opacity="0.900" filter="url(#b1)"/>
      <path d="M22 41.500C34 39.500 52 39.500 66 41" fill="none" stroke="#7f8fe0" stroke-width="1.600" opacity="0.800" filter="url(#b1)"/>
    </svg>
  </div>
  <!-- task view -->
  <svg style="left:395px;top:13px" width="20" height="19" viewBox="0 0 20 19" fill="none" stroke="#fff" stroke-width="1.200"><path d="M1 1.700h12M1 17.300h12"/><rect x="2.500" y="4.600" width="9.500" height="9.800"/><path d="M17 1v17"/><rect x="16" y="7.500" width="2" height="2.500" fill="#fff" stroke="none"/></svg>
  <!-- app 1 -->
  <div class="a ul" style="left:440px;width:45px"></div>
  <svg style="left:450px;top:9.500px" width="26" height="26" viewBox="0 0 26 26"><circle cx="13" cy="13" r="12.500" fill="#151c40"/><circle cx="13" cy="13" r="7.600" fill="none" stroke="#2ba6bb" stroke-width="2.200"/><circle cx="13" cy="13.500" r="3.300" fill="none" stroke="#2ba6bb" stroke-width="1.500"/><path d="M13 3v7.500" stroke="#151c40" stroke-width="2.800"/><path d="M13 5v5" stroke="#2ba6bb" stroke-width="1.200"/><path d="M11 21.500l2 2l2-2z" fill="#2ba6bb"/></svg>
  <!-- steam -->
  <div class="a ul" style="left:495px;width:46px"></div>
  <svg style="left:504px;top:9.500px" width="27" height="27" viewBox="0 0 27 27"><defs><linearGradient id="stg" x1="0" y1="0" x2="0.300" y2="1"><stop offset="0" stop-color="#15173a"/><stop offset="0.550" stop-color="#17305e"/><stop offset="1" stop-color="#1b7ab5"/></linearGradient></defs><circle cx="13.500" cy="13.500" r="13" fill="url(#stg)"/><circle cx="18" cy="9.500" r="4.200" fill="none" stroke="#f2f5fa" stroke-width="2"/><circle cx="18" cy="9.500" r="1.900" fill="#dfe6f0"/><path d="M0.800 12.500l8.700 3.600l4.800-4l2.300 2.600l-4.800 4.200c-0.400 2.200-3 3.300-5 2c-0.900-0.600-1.400-1.500-1.500-2.500L0.700 16z" fill="#f2f5fa"/><circle cx="9.200" cy="18.800" r="1.900" fill="#1a3f74"/></svg>
  <!-- ps active -->
  <div class="a" style="left:547px;top:0;width:55px;height:45px;background:#53646d"></div>
  <div class="a ul" style="left:547px;width:55px;background:#8fc5e8"></div>
  <svg style="left:561px;top:9.500px" width="26" height="24" viewBox="0 0 26 24"><rect x="0.500" y="0.500" width="25" height="23" rx="4.500" fill="#001e36"/><text x="4.800" y="17.500" font-family="Liberation Sans, sans-serif" font-size="13.500" font-weight="bold" fill="#46a6ef">Ps</text></svg>
  <!-- wechat -->
  <div class="a ul" style="left:607px;width:46px"></div>
  <svg style="left:615px;top:10px" width="30" height="27" viewBox="0 0 30 27"><ellipse cx="11" cy="9.500" rx="10.500" ry="9" fill="#40c353"/><path d="M5 16l-1.500 4.500l5-2.700z" fill="#40c353"/><ellipse cx="20" cy="17" rx="9.300" ry="7.800" fill="#f1f1f1"/><path d="M25 23l1.500 3.500l-4.500-2z" fill="#f1f1f1"/><circle cx="7.500" cy="7" r="1.300" fill="#0f6b00"/><circle cx="14.500" cy="7" r="1.300" fill="#0f6b00"/><circle cx="17" cy="15" r="1.100" fill="#d89a9a"/><circle cx="23" cy="15" r="1.100" fill="#d89a9a"/></svg>
  <!-- tray -->
  <span class="t" style="left:1102px;top:16px;font-size:11.500px;color:#fff;font-family:'Liberation Serif','Noto Serif CJK SC',serif;letter-spacing:-0.300px">EN</span>
  <svg style="left:1148px;top:9px" width="30" height="28" viewBox="0 0 30 28"><circle cx="13" cy="14" r="12.500" fill="#eef3f8"/><circle cx="13" cy="14" r="10.300" fill="#1b82e0"/><text x="7.300" y="21" font-family="Liberation Sans, sans-serif" font-size="19" font-weight="bold" fill="#fff">?</text><circle cx="23" cy="21" r="5.300" fill="#f0a030" stroke="#fff" stroke-width="0.800"/><rect x="22.300" y="17.800" width="1.500" height="4" fill="#fff"/><rect x="22.300" y="22.800" width="1.500" height="1.500" fill="#fff"/></svg>
  <!-- weather -->
  <svg style="left:1290px;top:9px" width="29" height="28" viewBox="0 0 29 28"><path d="M1 15.500C2 9 6.500 6 12 6s10 3 11 9.500c-1.400-1.300-2.700-1.300-3.700 0c-1.100-1.400-2.600-1.400-3.600 0c-1.100-1.400-2.600-1.400-3.700 0c-1-1.400-2.500-1.400-3.600 0c-1-1.400-2.500-1.400-3.700 0C3.700 14.200 2.400 14.200 1 15.500z" fill="#62aee8"/><path d="M5 10.500C7 8.300 9.500 7.300 12 7.200" stroke="#bfe0f8" stroke-width="1.200" fill="none"/><path d="M12 5v18c0 3.200 4 3.200 4 0" fill="none" stroke="#a79898" stroke-width="1.500"/><g stroke="#4a9ee6" stroke-width="1.700" stroke-linecap="round"><path d="M17.500 1.500l-0.800 2M21.500 2l-0.800 2M25.500 3.500l-0.800 2M26.500 8.500l-0.700 1.800M23.500 6.500l-0.600 1.500"/></g></svg>
  <span class="t" style="left:1327px;top:14px;font-size:16px;color:#fff">明天有雨</span>
  <svg style="left:1419px;top:18px" width="16" height="9" viewBox="0 0 16 9" fill="none" stroke="#fff" stroke-width="1.400"><path d="M0.700 8.500L8 1.200l7.300 7.300"/></svg>
  <svg style="left:1445px;top:14px" width="19" height="17" viewBox="0 0 19 17" fill="none" stroke="#fff" stroke-width="1.200"><path d="M0.700 5.500h3.500L8.500 1.500v14L4.200 11.500H0.700z"/><path d="M11 5.500c1.300 1.500 1.300 4.500 0 6"/><path d="M13.500 3.500c2.300 2.500 2.300 7.500 0 10" opacity="0.600"/><path d="M16 1.500c3.300 4 3.300 10 0 14" opacity="0.350"/></svg>
  <svg style="left:1470px;top:15px" width="22" height="15" viewBox="0 0 22 15"><rect x="5" y="3.500" width="15.500" height="8.500" fill="none" stroke="#fff" stroke-width="1"/><rect x="6.500" y="5" width="12.500" height="5.500" fill="#f4f4f4"/><rect x="21" y="6" width="1" height="3.500" fill="#fff"/><path d="M1.500 0.500v2.500M3.500 0.500v2.500M0.800 3h3.400v2.500c0 1-0.700 1.500-1.700 1.500s-1.700-0.500-1.700-1.500zM2.500 7v3.500h2.500" stroke="#fff" stroke-width="1" fill="none"/></svg>
  <svg style="left:1499px;top:11px" width="22" height="24" viewBox="0 0 22 24"><path d="M1 3.500L19 1v14L1 16.500z" fill="none" stroke="#fff" stroke-width="1.400"/><path d="M10 17v4M6 22h9" stroke="#fff" stroke-width="1.300"/><path d="M7 9a3.500 3.500 0 0 1 6-2M13.500 10a3.500 3.500 0 0 1-6 2" fill="none" stroke="#fff" stroke-width="1.200"/><circle cx="15.500" cy="18.500" r="4.200" fill="#f59a1f"/></svg>
  <svg style="left:1526px;top:14px" width="20" height="19" viewBox="0 0 20 19" fill="none" stroke="#fff" stroke-width="1.500"><path d="M1.500 17.500A16 16 0 0 1 17.500 1.500"/><path d="M5.500 17.500A12 12 0 0 1 17.500 5.500"/><path d="M9.500 17.500A8 8 0 0 1 17.500 9.500"/><circle cx="15" cy="16" r="1.700" fill="#fff" stroke="none"/></svg>
  <svg style="left:1556px;top:11px" width="22" height="25" viewBox="0 0 22 25" fill="none" stroke="#fff" stroke-width="1.500"><path d="M12 3.500c1.500-3 5.500-1.500 4.500 1.500L10 20c-1.500 3.500-6 2-4.800-1.500z"/><path d="M8 13c-4-1-7 1-6.500 3.500c0.500 2 3.500 2 4.500 1.500M15 10.500c3-0.500 6 0.500 6 2.500s-3 3-7.500 2"/></svg>
  <span class="t" style="left:1608px;top:5.500px;font-size:14px;color:#fff;letter-spacing:0.150px">15:52</span>
  <span class="t" style="left:1593px;top:26px;font-size:14px;color:#fff;letter-spacing:0.650px">2023/8/11</span>
  <svg style="left:1682px;top:11px" width="26" height="28" viewBox="0 0 26 28"><path d="M0 0h18v15H8l-4 4v-4H0z" fill="#fff"/><path d="M3 4h12M3 7.500h12M3 11h8" stroke="#1c3643" stroke-width="1.300"/><circle cx="17" cy="19" r="7.500" fill="#1c3643" stroke="#b8c4cc" stroke-width="1.300"/><text x="13.800" y="24" font-family="Liberation Sans, sans-serif" font-size="13.500" font-weight="bold" fill="#fff">1</text></svg>
  <div class="a" style="left:1722px;top:0;width:1px;height:45px;background:#5a6f7a"></div>
</div>

</body>
</html>
